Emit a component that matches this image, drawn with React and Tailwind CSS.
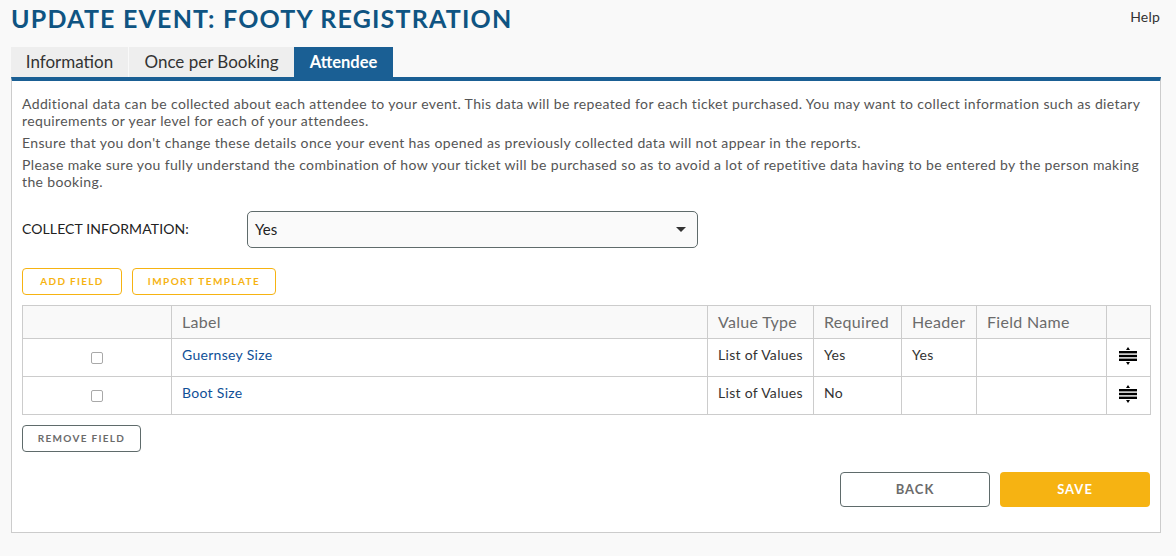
import React from 'react';

const rows = [
  { label: 'Guernsey Size', type: 'List of Values', required: 'Yes', header: 'Yes' },
  { label: 'Boot Size', type: 'List of Values', required: 'No', header: '' },
];

function DragIcon() {
  return (
    <svg width="18" height="18" viewBox="0 0 18 18" className="block ml-[12px]">
      <path d="M9 0 L11 3 H7 Z" fill="#000" />
      <rect x="0" y="4" width="18" height="2.4" fill="#000" />
      <rect x="0" y="7.8" width="18" height="2.4" fill="#000" />
      <rect x="0" y="11.6" width="18" height="2.4" fill="#000" />
      <path d="M9 18 L11 15 H7 Z" fill="#000" />
    </svg>
  );
}

export default function App() {
  return (
    <div className="w-[1176px] h-[556px] overflow-hidden bg-[#f9f9f9] font-['Lato',sans-serif] pl-[11px] pr-[15px]">
      <div className="flex justify-between h-[47px]">
        <h1 className="mt-[2px] text-[25px] leading-[32px] font-bold tracking-[1.2px] text-[#0f5482]">
          UPDATE EVENT: FOOTY REGISTRATION
        </h1>
        <a className="mt-[9px] mr-px text-[14px] leading-4 tracking-[0.2px] text-[#333]">Help</a>
      </div>

      <div className="flex h-[30px] text-[17px] leading-[30px]">
        <div className="w-[117px] mr-px bg-[#eeeeee] text-[#333] text-center">Information</div>
        <div className="w-[165px] bg-[#eeeeee] text-[#333] text-center">Once per Booking</div>
        <div className="w-[99px] bg-[#1a5f94] text-white font-bold text-[16.5px] text-center">Attendee</div>
      </div>

      <div className="h-[456px] bg-white border border-[#cccccc] border-t-4 border-t-[#1a5f94] px-[10px] pt-[14px]">
        <div className="text-[14px] leading-[17px] tracking-[0.37px] text-[#555]">
          <p>
            Additional data can be collected about each attendee to your event. This data will be repeated for each ticket purchased. You may want to collect information such as dietary requirements or year level for each of your attendees.
          </p>
          <p className="mt-[5px]">
            Ensure that you don't change these details once your event has opened as previously collected data will not appear in the reports.
          </p>
          <p className="mt-[5px]">
            Please make sure you fully understand the combination of how your ticket will be purchased so as to avoid a lot of repetitive data having to be entered by the person making the booking.
          </p>
        </div>

        <div className="flex items-center mt-[21px]">
          <label className="w-[225px] pb-[2px] text-[14px] tracking-[0.1px] text-[#222]">COLLECT INFORMATION:</label>
          <div className="w-[451px] h-[37px] flex items-center justify-between bg-[#fafafa] border border-[#5f6b6b] rounded-[5px] pl-[7px] pr-[11px] text-[15px] text-[#222]">
            <span>Yes</span>
            <span className="w-0 h-0 border-x-[5px] border-x-transparent border-t-[5px] border-t-[#333]" />
          </div>
        </div>

        <div className="flex gap-[10px] mt-[20px]">
          <button className="w-[100px] h-[27px] bg-white border border-[#f6b312] rounded-[4px] text-[10px] font-bold tracking-[1.3px] text-[#f6b312]">
            ADD FIELD
          </button>
          <button className="w-[144px] h-[27px] bg-white border border-[#f6b312] rounded-[4px] text-[10px] font-bold tracking-[1.4px] text-[#f6b312]">
            IMPORT TEMPLATE
          </button>
        </div>

        <table className="mt-[10px] w-[1128px] table-fixed border-collapse text-[14px] tracking-[0.3px] text-[#333]">
          <colgroup>
            <col className="w-[149px]" />
            <col className="w-[536px]" />
            <col className="w-[106px]" />
            <col className="w-[88px]" />
            <col className="w-[75px]" />
            <col className="w-[130px]" />
            <col className="w-[44px]" />
          </colgroup>
          <thead>
            <tr className="h-[33px] bg-[#f9f9f9] text-[16px] text-[#6b6b6b] text-left">
              <th className="border border-[#cccccc] font-normal" />
              <th className="border border-[#cccccc] font-normal px-[10px]">Label</th>
              <th className="border border-[#cccccc] font-normal px-[10px]">Value Type</th>
              <th className="border border-[#cccccc] font-normal px-[10px]">Required</th>
              <th className="border border-[#cccccc] font-normal px-[10px]">Header</th>
              <th className="border border-[#cccccc] font-normal px-[10px]">Field Name</th>
              <th className="border border-[#cccccc] font-normal" />
            </tr>
          </thead>
          <tbody>
            {rows.map((row) => (
              <tr key={row.label} className="h-[38px]">
                <td className="border border-[#cccccc]">
                  <input type="checkbox" className="block w-[12px] h-[12px] mx-auto appearance-none bg-white border border-[#a9a9a9] rounded-[2px]" />
                </td>
                <td className="border border-[#cccccc] px-[10px] pb-[6px] text-[#0f4f97]">{row.label}</td>
                <td className="border border-[#cccccc] px-[10px] pb-[6px]">{row.type}</td>
                <td className="border border-[#cccccc] px-[10px] pb-[6px]">{row.required}</td>
                <td className="border border-[#cccccc] px-[10px] pb-[6px]">{row.header}</td>
                <td className="border border-[#cccccc] px-[10px]" />
                <td className="border border-[#cccccc] pb-[4px]"><DragIcon /></td>
              </tr>
            ))}
          </tbody>
        </table>

        <button className="block mt-[10px] w-[119px] h-[27px] bg-white border border-[#5f6b6b] rounded-[4px] text-[10px] font-bold tracking-[1.3px] text-[#6b6b6b]">
          REMOVE FIELD
        </button>

        <div className="flex justify-end gap-[10px] mt-[20px]">
          <button className="w-[150px] h-[35px] bg-white border border-[#5f6b6b] rounded-[4px] text-[13px] font-bold tracking-[1px] text-[#6b6b6b]">
            BACK
          </button>
          <button className="w-[150px] h-[35px] bg-[#f6b312] rounded-[4px] text-[13px] font-bold tracking-[1px] text-white">
            SAVE
          </button>
        </div>
      </div>
    </div>
  );
}
